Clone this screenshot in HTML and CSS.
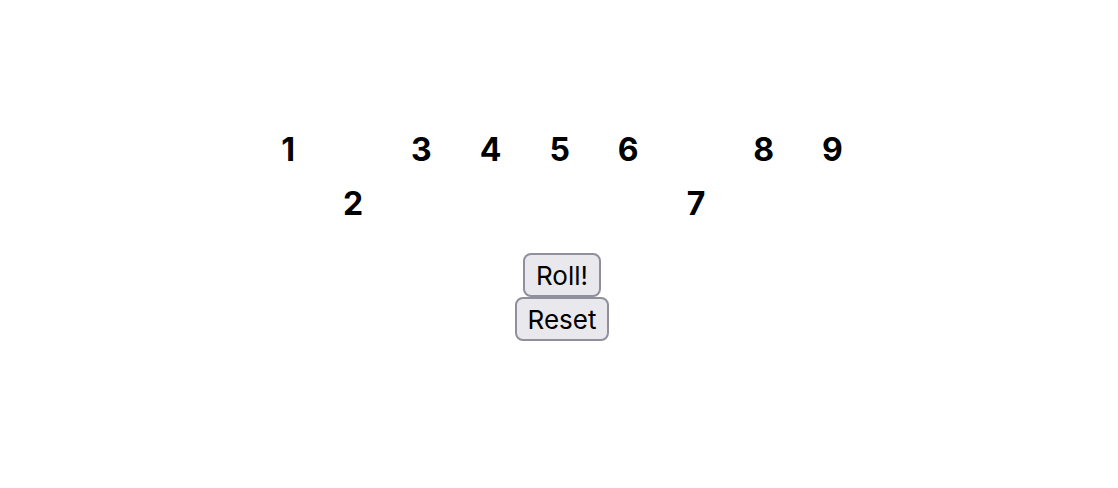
FILE: index.html
```html
<!DOCTYPE html>
<html lang="en">
<head>
<meta charset="utf-8">
<title>Shut the Box</title>
<link rel="stylesheet" href="styles.css">
</head>
<body>
<main class="game">
  <div class="tiles">
    <span class="tile">1</span>
    <span class="tile tile-down">2</span>
    <span class="tile">3</span>
    <span class="tile">4</span>
    <span class="tile">5</span>
    <span class="tile">6</span>
    <span class="tile tile-down">7</span>
    <span class="tile">8</span>
    <span class="tile">9</span>
  </div>
  <div class="controls">
    <button class="button" type="button">Roll!</button>
    <button class="button" type="button">Reset</button>
  </div>
</main>
</body>
</html>
```

FILE: styles.css
```css
body {
  margin: 0;
  background: #fff;
  color: #000;
  font-family: Inter, sans-serif;
}

.game {
  display: flex;
  flex-direction: column;
  align-items: center;
  gap: 22px;
  padding: 123px 0 0 6px;
}

.tiles {
  display: flex;
  gap: 48px;
  height: 108px;
  font-size: 32px;
  font-weight: 700;
  line-height: 54px;
}

.tile-down {
  align-self: flex-end;
}

.controls {
  display: flex;
  flex-direction: column;
  align-items: center;
}

.button {
  height: 44px;
  padding: 0 11px;
  border: 2px solid #8f8f9d;
  border-radius: 8px;
  background: #e9e9ed;
  color: #000;
  font-family: inherit;
  font-size: 26px;
}
```
